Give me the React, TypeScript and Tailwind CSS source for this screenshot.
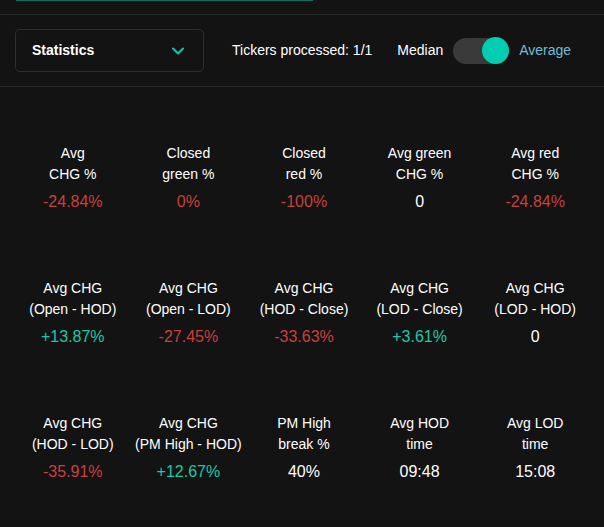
import { ChevronDown } from "lucide-react";

type Stat = { label: [string, string]; value: string; tone?: "red" | "green" };

const stats: Stat[] = [
  { label: ["Avg", "CHG %"], value: "-24.84%", tone: "red" },
  { label: ["Closed", "green %"], value: "0%", tone: "red" },
  { label: ["Closed", "red %"], value: "-100%", tone: "red" },
  { label: ["Avg green", "CHG %"], value: "0" },
  { label: ["Avg red", "CHG %"], value: "-24.84%", tone: "red" },
  { label: ["Avg CHG", "(Open - HOD)"], value: "+13.87%", tone: "green" },
  { label: ["Avg CHG", "(Open - LOD)"], value: "-27.45%", tone: "red" },
  { label: ["Avg CHG", "(HOD - Close)"], value: "-33.63%", tone: "red" },
  { label: ["Avg CHG", "(LOD - Close)"], value: "+3.61%", tone: "green" },
  { label: ["Avg CHG", "(LOD - HOD)"], value: "0" },
  { label: ["Avg CHG", "(HOD - LOD)"], value: "-35.91%", tone: "red" },
  { label: ["Avg CHG", "(PM High - HOD)"], value: "+12.67%", tone: "green" },
  { label: ["PM High", "break %"], value: "40%" },
  { label: ["Avg HOD", "time"], value: "09:48" },
  { label: ["Avg LOD", "time"], value: "15:08" },
];

const toneClass = {
  red: "text-[#c8403f]",
  green: "text-[#1cc8a6]",
};

export default function App() {
  return (
    <main
      className="min-h-[527px] bg-[#131313] text-white"
      style={{ fontFamily: '"Liberation Sans", Arial, sans-serif' }}
    >
      <div className="h-[15px] border-b border-[#2a2a2a] pl-[16px]">
        <div className="h-[1px] w-[297px] bg-[#0d6e5c]" />
      </div>

      <div className="flex items-center h-[72px] px-[15px] border-b border-[#2a2a2a] text-[14px]">
        <div className="flex items-center justify-between w-[189px] h-[43px] border border-[#2f2f2f] rounded-[5px] pl-[16px] pr-[15px]">
          <span className="font-bold">Statistics</span>
          <ChevronDown className="w-[20px] h-[20px] text-[#14c4a8]" strokeWidth={2.5} />
        </div>
        <span className="ml-[28px]">Tickers processed: 1/1</span>
        <span className="ml-[25px]">Median</span>
        <div className="ml-[10px] flex items-center justify-end w-[56px] h-[26px] rounded-full bg-[#3a3a3a]">
          <div className="w-[27px] h-[27px] rounded-full bg-[#00cdb2]" />
        </div>
        <span className="ml-[10px] text-[#72bcd4]">Average</span>
      </div>

      <div className="grid grid-cols-5 w-[578px] ml-[15px] pt-[56px] gap-y-[64px]">
        {stats.map((s, i) => (
          <div key={i} className="flex flex-col items-center text-center">
            <div className="text-[14px] leading-[21px]">
              <div>{s.label[0]}</div>
              <div>{s.label[1]}</div>
            </div>
            <div
              className={`mt-[5px] text-[16px] leading-[24px] ${
                s.tone ? toneClass[s.tone] : "text-white"
              }`}
            >
              {s.value}
            </div>
          </div>
        ))}
      </div>
    </main>
  );
}
